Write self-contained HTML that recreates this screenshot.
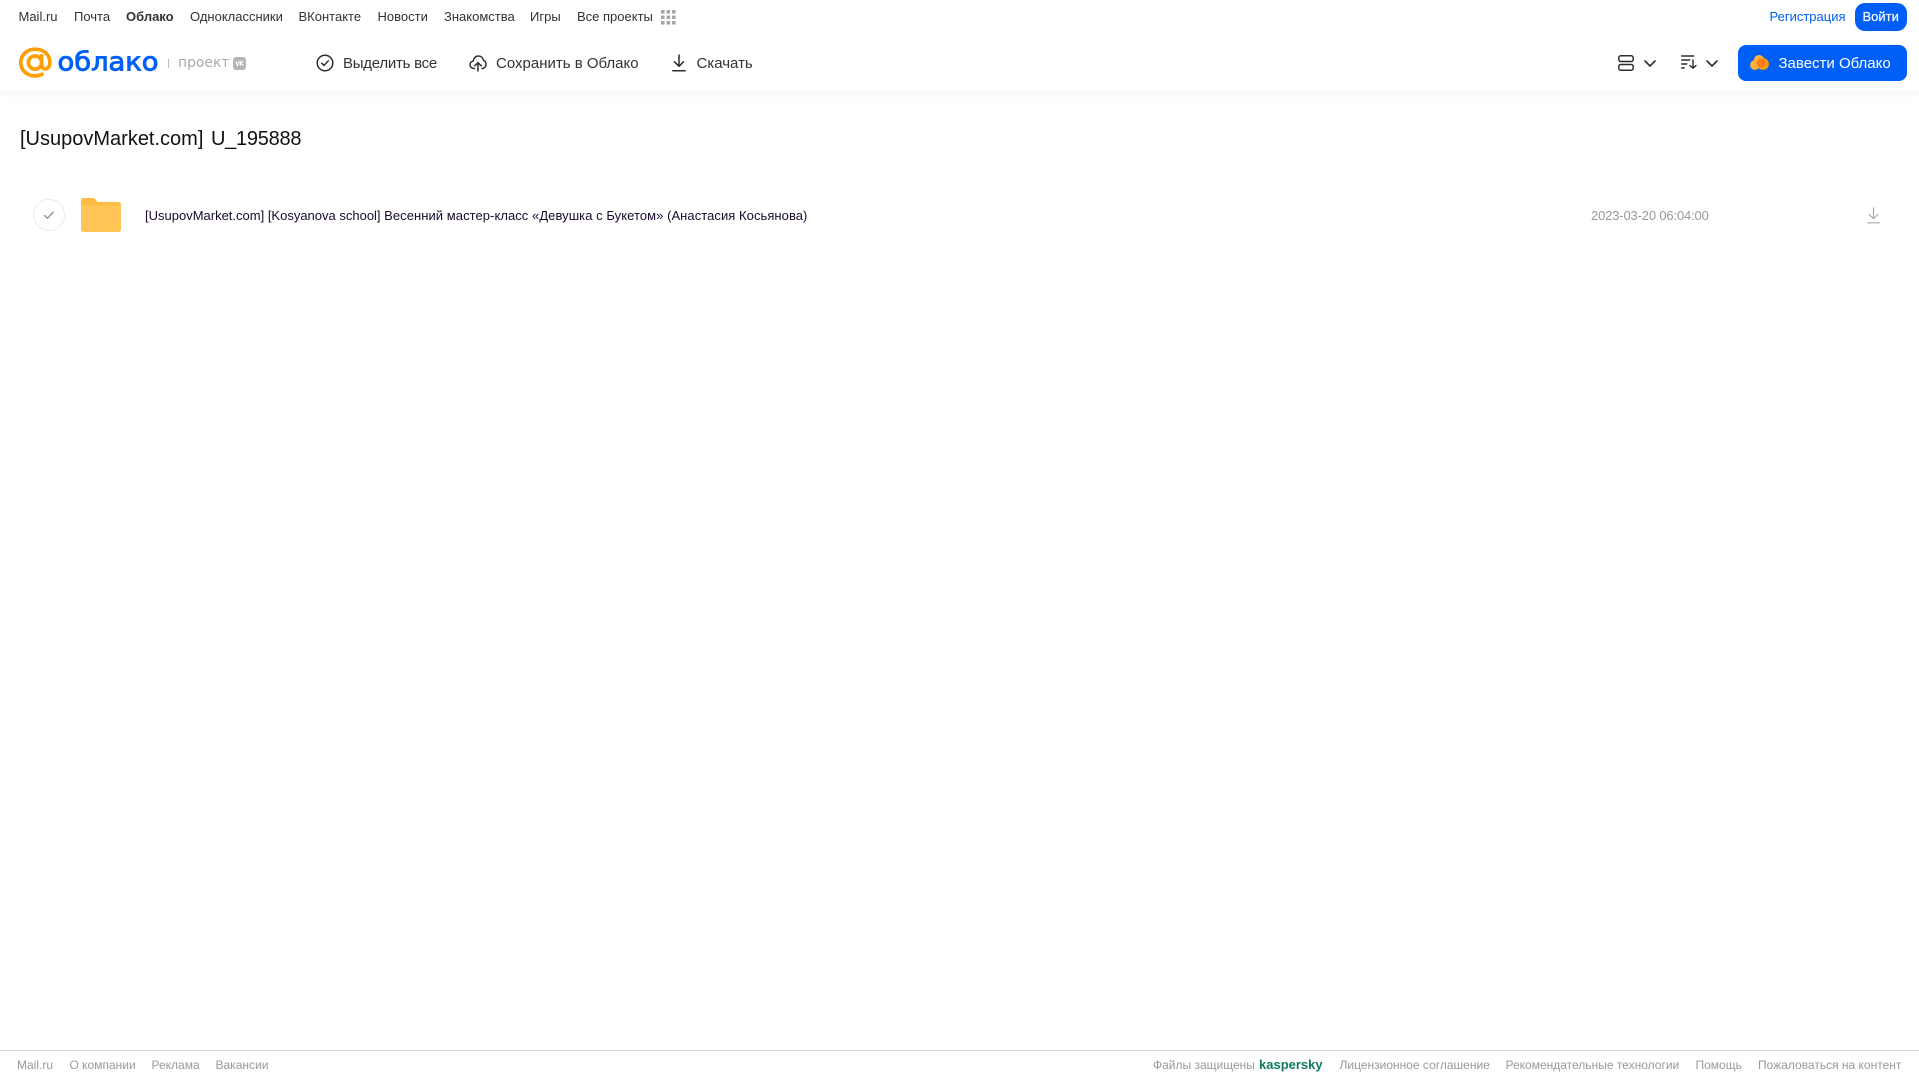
<!DOCTYPE html>
<html lang="ru">
<head>
<meta charset="utf-8">
<title>Облако</title>
<style>
html,body{margin:0;padding:0;background:#fff;}
body{width:1919px;height:1079px;overflow:hidden;position:relative;font-family:"Liberation Sans",Arial,sans-serif;}
.t{position:absolute;white-space:nowrap;line-height:20px;height:20px;}
.n{top:7px;font-size:13px;color:#333;}
.b{top:54px;font-size:15px;color:#333;}
.f{top:1055px;font-size:12px;color:#999;}
svg{position:absolute;overflow:visible;}
#hdr{position:absolute;left:0;top:0;width:1919px;height:91px;background:#fff;box-shadow:0 2px 8px rgba(0,0,0,.06);}
#ftl{position:absolute;left:0;top:1050px;width:1919px;height:1px;background:#d8d8d8;}
.btn{position:absolute;background:#005ff9;}
</style>
</head>
<body>
<div id="hdr"></div>

<div class="t n" style="left:18.5px">Mail.ru</div>
<div class="t n" style="left:74px">Почта</div>
<div class="t n" style="left:126px;font-weight:bold">Облако</div>
<div class="t n" style="left:190px">Одноклассники</div>
<div class="t n" style="left:298.5px">ВКонтакте</div>
<div class="t n" style="left:377.5px">Новости</div>
<div class="t n" style="left:444px">Знакомства</div>
<div class="t n" style="left:530px">Игры</div>
<div class="t n" style="left:577px">Все проекты</div>
<svg style="left:661px;top:10px" width="15" height="15" viewBox="0 0 15 15" fill="#a5a5a5">
<rect x="0" y="0" width="3.6" height="3.6" rx=".8"/><rect x="5.5" y="0" width="3.6" height="3.6" rx=".8"/><rect x="11" y="0" width="3.6" height="3.6" rx=".8"/>
<rect x="0" y="5.5" width="3.6" height="3.6" rx=".8"/><rect x="5.5" y="5.5" width="3.6" height="3.6" rx=".8"/><rect x="11" y="5.5" width="3.6" height="3.6" rx=".8"/>
<rect x="0" y="11" width="3.6" height="3.6" rx=".8"/><rect x="5.5" y="11" width="3.6" height="3.6" rx=".8"/><rect x="11" y="11" width="3.6" height="3.6" rx=".8"/>
</svg>

<div class="t n" style="left:1769.5px;color:#005ff9">Регистрация</div>
<div class="btn" style="left:1855px;top:3px;width:52px;height:28px;border-radius:10px"></div>
<div class="t n" style="left:1862.5px;color:#fff;-webkit-text-stroke:.2px #fff">Войти</div>

<!-- logo -->
<svg style="left:19px;top:47px" width="33" height="32" viewBox="0 0 34 32" fill="none" stroke="#ff9e00" stroke-width="3.8">
<circle cx="16.5" cy="15.5" r="6.8"/>
<path d="M23.3 8.5v9.5c0 2.6 1.6 4 3.6 4s4.9-1.6 4.9-6.5C31.8 7 25 1.8 16.5 1.8 8.3 1.8 1.8 8 1.8 15.5c0 8 6.500 13.800 14.700 13.800 2.800 0 5.100-.6 7.200-1.700" stroke-linecap="round"/>
</svg>
<svg style="left:57px;top:42px" width="104" height="36">
<text x="0.5" y="28.500" font-family="'DejaVu Sans',sans-serif" font-size="26" fill="#005ff9" stroke="#005ff9" stroke-width=".9" textLength="101" lengthAdjust="spacingAndGlyphs">облако</text>
</svg>
<div style="position:absolute;left:167.500px;top:59px;width:1px;height:9px;background:#bbb"></div>
<svg style="left:177.5px;top:50px" width="54" height="24">
<text x="0" y="17" font-family="'DejaVu Sans',sans-serif" font-size="14" fill="#aaa" textLength="51.5" lengthAdjust="spacingAndGlyphs">проект</text>
</svg>
<svg style="left:232.500px;top:57px" width="13" height="13" viewBox="0 0 13 13">
<rect width="13" height="13" rx="3" fill="#b5b5b5"/>
<path d="M2.800 4.300l1.700 4.200 1.700-4.200M7.300 3.800v4.800M10.300 4.200L7.600 6.300l2.800 2.300" fill="none" stroke="#fff" stroke-width="1.100"/>
</svg>

<!-- toolbar -->
<svg style="left:316px;top:54px" width="18" height="18" viewBox="0 0 18 18" fill="none" stroke="#2c2d2e" stroke-width="1.500">
<circle cx="9" cy="9" r="7.800"/><path d="M5.600 9.200l2.400 2.300 4.300-4.600" stroke-linecap="round" stroke-linejoin="round"/>
</svg>
<div class="t b" style="left:343px;letter-spacing:-.25px">Выделить все</div>
<svg style="left:469px;top:54px" width="18" height="18" viewBox="0 0 18 18" fill="none" stroke="#2c2d2e" stroke-width="1.500" stroke-linecap="round" stroke-linejoin="round">
<path d="M5.500 14.500H4.800C2.600 14.500 1 12.800 1 10.800c0-1.900 1.300-3.400 3.100-3.700C4.600 4.100 6.700 2 9.400 2c2.600 0 4.600 1.800 5.100 4.300 1.500.6 2.500 2.300 2.500 4 0 2.300-1.600 4.200-4 4.200"/>
<path d="M9 17V9M5.800 11.800L9 8.600l3.200 3.200"/>
</svg>
<div class="t b" style="left:496px">Сохранить в Облако</div>
<svg style="left:671px;top:54px" width="16" height="18" viewBox="0 0 16 18" fill="none" stroke="#2c2d2e" stroke-width="1.500" stroke-linecap="round" stroke-linejoin="round">
<path d="M8 1v11M3.500 7.800L8 12.300l4.500-4.500M1.800 16.800h12.400"/>
</svg>
<div class="t b" style="left:696.5px">Скачать</div>

<!-- right toolbar -->
<svg style="left:1618px;top:55px" width="16" height="16" viewBox="0 0 16 16" fill="none" stroke="#2c2d2e" stroke-width="1.500">
<rect x=".8" y=".8" width="14.400" height="5.700" rx="2"/><rect x=".8" y="9.500" width="14.400" height="5.700" rx="2"/>
</svg>
<svg style="left:1644px;top:59.500px" width="12" height="7" viewBox="0 0 12 7" fill="none" stroke="#2c2d2e" stroke-width="1.600" stroke-linecap="round" stroke-linejoin="round"><path d="M1 1l5 5 5-5"/></svg>
<svg style="left:1681px;top:55px" width="16" height="14" viewBox="0 0 16 14" fill="none" stroke="#2c2d2e" stroke-width="1.400" stroke-linecap="round" stroke-linejoin="round">
<path d="M.7 1h12M.7 5h8M.7 9h5M.7 13h2.500M12 5v8M9 10.500l3 2.800 3-2.800"/>
</svg>
<svg style="left:1706px;top:59.500px" width="12" height="7" viewBox="0 0 12 7" fill="none" stroke="#2c2d2e" stroke-width="1.600" stroke-linecap="round" stroke-linejoin="round"><path d="M1 1l5 5 5-5"/></svg>

<div class="btn" style="left:1738px;top:45px;width:169px;height:36px;border-radius:8px"></div>
<svg style="left:1750px;top:55px" width="19" height="15" viewBox="0 0 19 15">
<circle cx="5" cy="10" r="4.900" fill="#ffb238"/><circle cx="9" cy="5.200" r="5.200" fill="#ffb238"/><circle cx="13" cy="9" r="5.900" fill="#ff9e00"/>
<circle cx="11" cy="8" r="4.300" fill="#ff7a1f"/>
</svg>
<div class="t" style="left:1778.500px;top:54px;font-size:15px;color:#fff">Завести Облако</div>

<!-- title -->
<div class="t" style="left:20px;top:127px;height:24px;line-height:24px;font-size:20px;color:#111;word-spacing:2px">[UsupovMarket.com] <span style="letter-spacing:-.25px">U_195888</span></div>

<!-- row -->
<svg style="left:33px;top:199px" width="32" height="32" viewBox="0 0 32 32" fill="none">
<circle cx="16" cy="16" r="15.500" stroke="#ebebeb"/>
<path d="M11.500 16.500l3 2.700 5.500-6" stroke="#999" stroke-width="1.500" stroke-linecap="round" stroke-linejoin="round"/>
</svg>
<svg style="left:81px;top:198px" width="40" height="34" viewBox="0 0 40 34">
<path d="M2.500 0h9c1.500 0 2.400.6 3.300 1.700L16.500 4h21A2.500 2.500 0 0 1 40 6.500v25a2.500 2.500 0 0 1-2.500 2.500h-35A2.500 2.500 0 0 1 0 31.500v-29A2.500 2.500 0 0 1 2.500 0z" fill="#ffbb44"/>
<path d="M0 7.500h40v24a2.500 2.500 0 0 1-2.500 2.500h-35A2.500 2.500 0 0 1 0 31.500z" fill="#ffc557"/>
</svg>
<div class="t" style="left:145px;top:206px;font-size:13px;color:#1a0a2e">[UsupovMarket.com] [Kosyanova school] <span style="letter-spacing:.055px">Весенний мастер-класс «Девушка с Букетом» (Анастасия Косьянова)</span></div>
<div class="t" style="left:1591px;top:206px;font-size:13px;color:#999;letter-spacing:-.16px">2023-03-20 06:04:00</div>
<svg style="left:1866.500px;top:206.500px" width="13" height="17" viewBox="0 0 13 17" fill="none" stroke="#aaa" stroke-width="1.200">
<path d="M6.500 .5v11M1.800 7l4.700 4.700L11.200 7M.3 15.800h12.400"/>
</svg>

<!-- footer -->
<div id="ftl"></div>
<div class="t f" style="left:17px">Mail.ru</div>
<div class="t f" style="left:69.500px">О компании</div>
<div class="t f" style="left:151.500px">Реклама</div>
<div class="t f" style="left:215.500px">Вакансии</div>
<div class="t f" style="left:1153px">Файлы защищены</div>
<div class="t" style="left:1259px;top:1055px;font-size:13px;font-weight:bold;color:#0f7b63">kaspersky</div>
<div class="t f" style="left:1339.500px">Лицензионное соглашение</div>
<div class="t f" style="left:1505.500px">Рекомендательные технологии</div>
<div class="t f" style="left:1695.500px">Помощь</div>
<div class="t f" style="left:1758px">Пожаловаться на контент</div>
</body>
</html>
